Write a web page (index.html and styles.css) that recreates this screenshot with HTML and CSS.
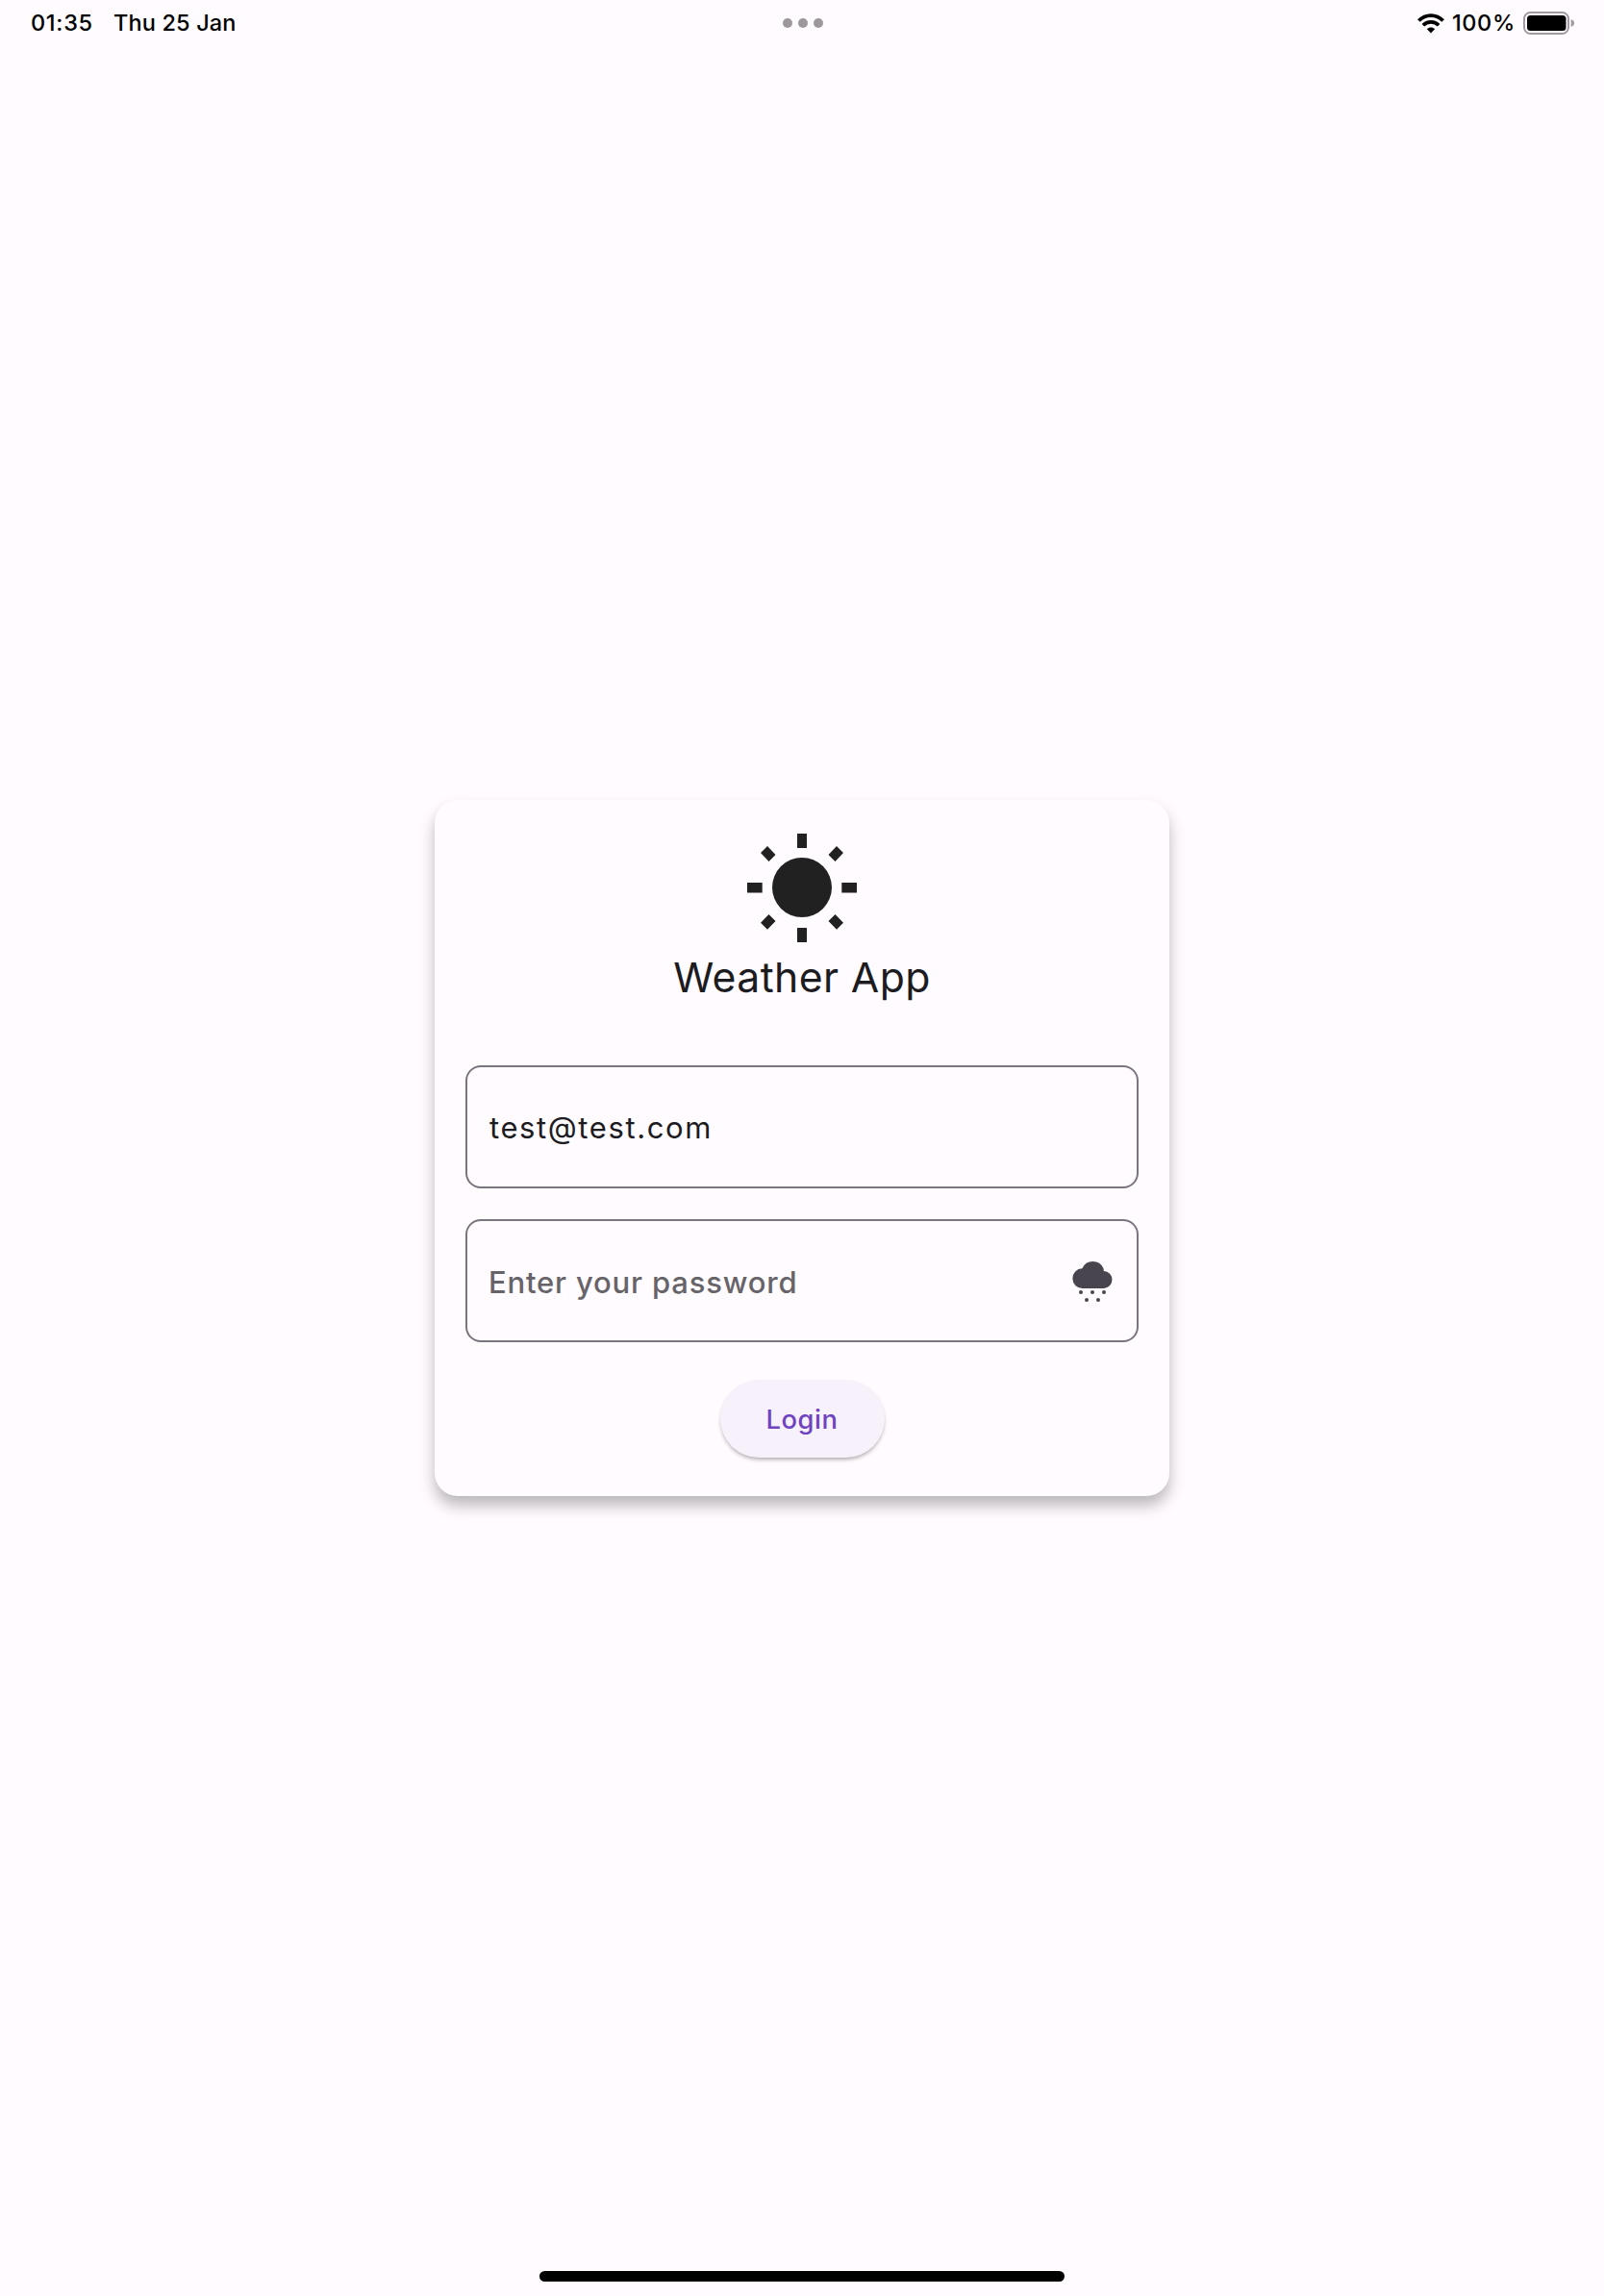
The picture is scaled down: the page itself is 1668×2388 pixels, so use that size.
FILE: index.html
```html
<!DOCTYPE html>
<html lang="en">
<head>
<meta charset="utf-8">
<title>Weather App</title>
<link rel="stylesheet" href="styles.css">
</head>
<body>
<header class="status">
  <div class="status-left"><span class="time">01:35</span><span class="date">Thu 25 Jan</span></div>
  <div class="dots"><i></i><i></i><i></i></div>
  <div class="status-right">
    <svg class="wifi" width="28" height="21" viewBox="0 0 28 21" fill="none" stroke="#000" stroke-width="3.7">
      <path d="M1.4 7.6C8.3.2 19.7.2 26.6 7.6"/>
      <path d="M5.9 12.3c4.5-4.7 11.7-4.7 16.2 0"/>
      <path d="M9.9 16.2c2.3-2.3 5.9-2.3 8.2 0L14 20.4z" fill="#000" stroke="none"/>
    </svg>
    <span class="percent">100%</span>
    <svg class="battery" width="54" height="24" viewBox="0 0 54 24">
      <rect x="1" y="1" width="46" height="22" rx="6.5" fill="none" stroke="#9f9ba0" stroke-width="2"/>
      <rect x="4" y="4" width="40.5" height="16" rx="3.5"/>
      <path d="M49.7 8q3.4 1.5 3.4 4t-3.4 4z" fill="#9f9ba0"/>
    </svg>
  </div>
</header>
<main class="stage">
  <form class="card">
    <svg class="sun" width="116" height="116" viewBox="776 865 116 116" fill="#212121">
      <circle cx="834" cy="923" r="31"/>
      <path d="M829 867h10v15h-10zM829 965h10v15h-10zM777 918h15.7v10.5H777zM875.3 918H891v10.5h-15.7z"/>
      <path d="M791 887l7-7 8.5 8.9-7 7zM877 887l-7-7-8.5 8.9 7 7zM791 959.8l7 7 8.5-8.9-7-7zM877 959.8l-7 7-8.5-8.9 7-7z"/>
    </svg>
    <h1 class="title">Weather App</h1>
    <div class="field"><span class="value">test@test.com</span></div>
    <div class="field">
      <span class="hint">Enter your password</span>
      <svg class="rain" width="48" height="48" viewBox="1112 1308 48 48" fill="#49454f">
        <path d="M1126 1340a10.3 10.3 0 0 1-.6-20.7 12 12 0 0 1 22-.2 7 7 0 0 1 .4 2.9 9 9 0 0 1-.6 18z"/>
        <circle cx="1124" cy="1344" r="2"/><circle cx="1136" cy="1344" r="2"/><circle cx="1148" cy="1344" r="2"/>
        <circle cx="1130" cy="1352" r="2"/><circle cx="1142" cy="1352" r="2"/>
      </svg>
    </div>
    <button class="login" type="button">Login</button>
  </form>
</main>
<footer class="home"><div class="home-bar"></div></footer>
</body>
</html>
```
FILE: styles.css
```css
* { box-sizing: border-box; }
body {
  margin: 0;
  height: 2388px;
  display: flex;
  flex-direction: column;
  background: #fffbff;
  color: #1c1b1f;
  font-family: Inter, "Liberation Sans", sans-serif;
}
.status {
  height: 48px;
  padding: 0 30px 0 32px;
  display: grid;
  grid-template-columns: 1fr 42px 1fr;
  align-items: center;
  color: #000;
  font-size: 23.5px;
  font-weight: 500;
  line-height: 48px;
}
.status-left { display: flex; gap: 21px; }
.time { width: 65px; letter-spacing: .7px; white-space: nowrap; }
.date { letter-spacing: .15px; }
.dots { display: flex; gap: 6px; }
.dots i { width: 10px; height: 10px; border-radius: 50%; background: #9c989c; }
.status-right { display: flex; justify-content: flex-end; align-items: center; }
.percent { width: 64px; margin: 0 10px 0 8px; letter-spacing: .6px; }
.stage { flex: 1; display: flex; justify-content: center; align-items: flex-start; padding-top: 784px; }
.card {
  width: 764px;
  height: 724px;
  padding: 33px 32px 0;
  display: flex;
  flex-direction: column;
  align-items: center;
  border-radius: 24px;
  background: #fffbff;
  box-shadow: 0 10px 16px rgba(0, 0, 0, .27);
}
.sun { display: block; flex: none; }
.title {
  margin: 7px 0 62px;
  font-size: 42.7px;
  font-weight: 400;
  letter-spacing: .4px;
  line-height: 58px;
  white-space: nowrap;
}
.field {
  width: 700px;
  height: 128px;
  margin-bottom: 32px;
  padding: 0 22px;
  display: flex;
  flex: none;
  align-items: center;
  justify-content: space-between;
  border: 2px solid #7a757f;
  border-radius: 16px;
  font-size: 31px;
  white-space: nowrap;
}
.value { padding: 1px 0 0 1px; letter-spacing: 1.6px; }
.hint { padding-top: 2px; color: #666468; font-weight: 500; letter-spacing: .82px; }
.login {
  width: 171px;
  height: 81px;
  margin-top: 7px;
  padding: 2px 0 0;
  border: 0;
  border-radius: 41px;
  background: #f6f1fb;
  color: #6f43c0;
  font: 500 27.3px/79px Inter, "Liberation Sans", sans-serif;
  letter-spacing: .6px;
  box-shadow: 0 3px 4px -1px rgba(0, 0, 0, .32);
}
.home { height: 26px; display: flex; justify-content: center; }
.home-bar { width: 546px; height: 11px; border-radius: 6px; background: #000; }
```
